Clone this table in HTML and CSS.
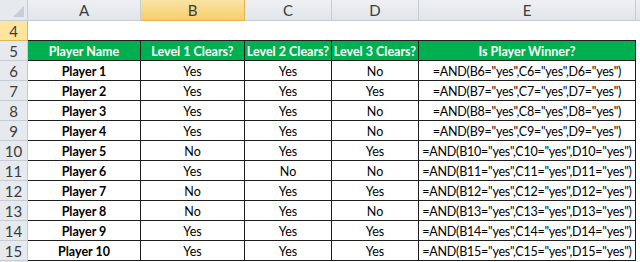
FILE: index.html
```html
<!DOCTYPE html>
<html>
<head>
<meta charset="utf-8">
<link rel="stylesheet" href="styles.css">
</head>
<body>
<div class="sheet">
  <div class="corner"><span class="tri"></span></div>
  <div class="colhead">A</div>
  <div class="colhead sel">B</div>
  <div class="colhead">C</div>
  <div class="colhead">D</div>
  <div class="colhead">E</div>
  <div class="colhead last"></div>

  <div class="rowhead sel">4</div>
  <div class="blank"></div><div class="blank"></div><div class="blank"></div><div class="blank"></div><div class="blank"></div>
  <div class="pad"></div>

  <div class="rowhead">5</div>
  <div class="th">Player Name</div>
  <div class="th">Level 1 Clears?</div>
  <div class="th">Level 2 Clears?</div>
  <div class="th">Level 3 Clears?</div>
  <div class="th">Is Player Winner?</div>
  <div class="pad"></div>

  <div class="rowhead">6</div>
  <div class="td name">Player 1</div><div class="td">Yes</div><div class="td">Yes</div><div class="td">No</div>
  <div class="td formula">=AND(B6="yes",C6="yes",D6="yes")</div><div class="pad"></div>

  <div class="rowhead">7</div>
  <div class="td name">Player 2</div><div class="td">Yes</div><div class="td">Yes</div><div class="td">Yes</div>
  <div class="td formula">=AND(B7="yes",C7="yes",D7="yes")</div><div class="pad"></div>

  <div class="rowhead">8</div>
  <div class="td name">Player 3</div><div class="td">Yes</div><div class="td">Yes</div><div class="td">No</div>
  <div class="td formula">=AND(B8="yes",C8="yes",D8="yes")</div><div class="pad"></div>

  <div class="rowhead">9</div>
  <div class="td name">Player 4</div><div class="td">Yes</div><div class="td">Yes</div><div class="td">No</div>
  <div class="td formula">=AND(B9="yes",C9="yes",D9="yes")</div><div class="pad"></div>

  <div class="rowhead">10</div>
  <div class="td name">Player 5</div><div class="td">No</div><div class="td">Yes</div><div class="td">Yes</div>
  <div class="td formula">=AND(B10="yes",C10="yes",D10="yes")</div><div class="pad"></div>

  <div class="rowhead">11</div>
  <div class="td name">Player 6</div><div class="td">Yes</div><div class="td">No</div><div class="td">No</div>
  <div class="td formula">=AND(B11="yes",C11="yes",D11="yes")</div><div class="pad"></div>

  <div class="rowhead">12</div>
  <div class="td name">Player 7</div><div class="td">No</div><div class="td">Yes</div><div class="td">Yes</div>
  <div class="td formula">=AND(B12="yes",C12="yes",D12="yes")</div><div class="pad"></div>

  <div class="rowhead">13</div>
  <div class="td name">Player 8</div><div class="td">No</div><div class="td">Yes</div><div class="td">No</div>
  <div class="td formula">=AND(B13="yes",C13="yes",D13="yes")</div><div class="pad"></div>

  <div class="rowhead">14</div>
  <div class="td name">Player 9</div><div class="td">Yes</div><div class="td">Yes</div><div class="td">Yes</div>
  <div class="td formula">=AND(B14="yes",C14="yes",D14="yes")</div><div class="pad"></div>

  <div class="rowhead">15</div>
  <div class="td name">Player 10</div><div class="td">Yes</div><div class="td">Yes</div><div class="td">Yes</div>
  <div class="td formula">=AND(B15="yes",C15="yes",D15="yes")</div><div class="pad"></div>

  <div class="rowhead tail"></div>
</div>
</body>
</html>
```

FILE: styles.css
```css
html, body {
  margin: 0;
  padding: 0;
  background: #ffffff;
}
body {
  width: 640px;
  height: 262px;
  overflow: hidden;
  font-family: Lato, "Liberation Sans", sans-serif;
}
.sheet {
  display: grid;
  grid-template-columns: 28px 113px 104px 87px 87px 217px 4px;
  grid-template-rows: 21px 20px 20px repeat(10, 20px) 1fr;
  height: 262px;
}
.sheet > div {
  box-sizing: border-box;
  display: flex;
  align-items: center;
  justify-content: center;
  white-space: nowrap;
  overflow: hidden;
}
.corner {
  background: #e6e9ee;
  border-right: 1px solid #c6ccd4;
  border-bottom: 1px solid #c6ccd4;
  position: relative;
}
.tri {
  position: absolute;
  right: 3px;
  bottom: 3px;
  width: 0;
  height: 0;
  border-left: 11px solid transparent;
  border-bottom: 11px solid #c9ced6;
}
.colhead {
  background: linear-gradient(#eef0f3, #e1e5ea);
  border-right: 1px solid #c6ccd4;
  border-bottom: 1px solid #c6ccd4;
  color: #3c3c3c;
  font-size: 15px;
}
.colhead.sel {
  background: linear-gradient(#f9e3a4, #f6cf6a);
  border-right-color: #e2b54e;
  border-bottom-color: #e2b54e;
}
.colhead.last {
  border-right: none;
}
.rowhead {
  background: #e6e9ee;
  border-right: 1px solid #c6ccd4;
  border-bottom: 1px solid #c6ccd4;
  color: #3c3c3c;
  font-size: 15px;
  padding-top: 1px;
}
.rowhead.sel {
  background: #fde59f;
  border-right-color: #e2b54e;
  border-bottom-color: #e2b54e;
}
.rowhead.tail {
  border-bottom: none;
}
.blank {
  border-bottom: 1px solid #1e1e1e;
}
.pad {
  background: #ffffff;
}
.th {
  background: #00b050;
  color: #ffffff;
  font-weight: 700;
  font-size: 12.5px;
  border-right: 1px solid #1e1e1e;
  border-bottom: 1px solid #1e1e1e;
  padding-top: 1px;
}
.td {
  background: #ffffff;
  color: #000000;
  font-size: 12.5px;
  border-right: 1px solid #1e1e1e;
  border-bottom: 1px solid #1e1e1e;
  padding-top: 1px;
}
.td.name {
  font-weight: 700;
}
.td.formula {
  letter-spacing: -0.25px;
}
```
